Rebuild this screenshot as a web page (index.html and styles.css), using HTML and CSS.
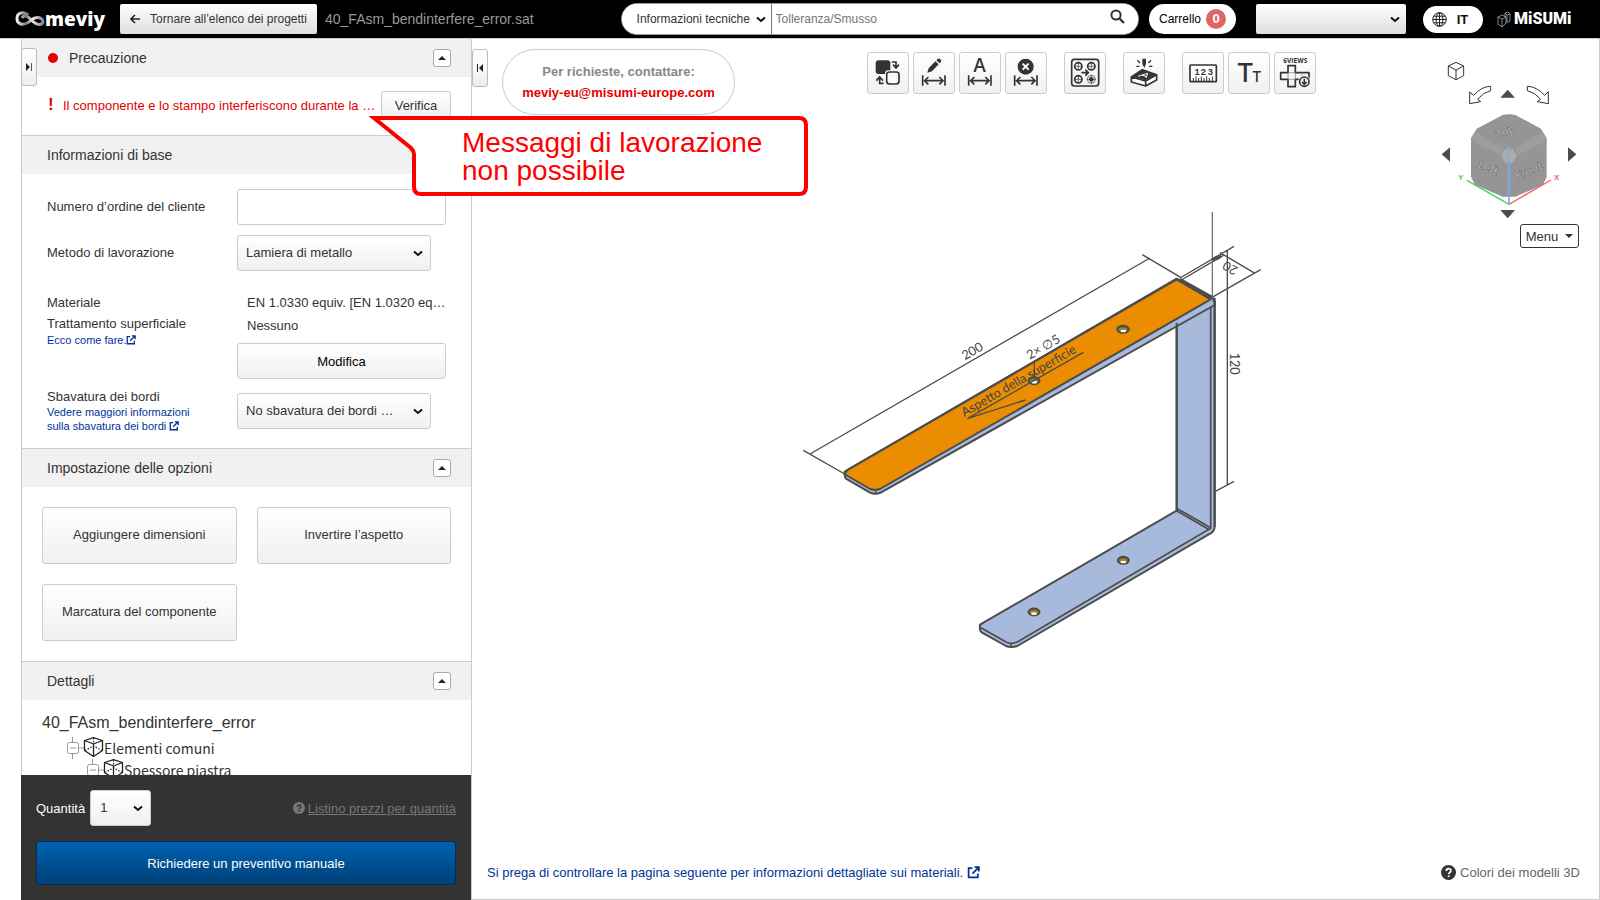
FILE: index.html
```html
<!DOCTYPE html>
<html lang="it">
<head>
<meta charset="utf-8">
<title>meviy</title>
<link rel="stylesheet" href="styles.css">
</head>
<body>
<svg class="defs" aria-hidden="true">
  <defs>
    <symbol id="external" viewBox="0 0 12 12"><path d="M5 2H1.500V10.500H10V7M7 1H11V5M11 1L5 7" fill="none" stroke="currentColor" stroke-width="1.600"/></symbol>
    <symbol id="span-arrow" viewBox="3 3 120 120"><g fill="none" stroke="#333" stroke-width="5"><path d="M29 70V101M96 70V101M36 86H90M46 75L35 86L46 97M79 75L90 86L79 97"/></g></symbol>
    <symbol id="question" viewBox="0 0 14 14"><circle cx="7" cy="7" r="7" fill="currentColor"/><path d="M5 5.500C5 2.700 9.200 2.900 9.200 5.300C9.200 6.800 7.200 6.900 7.200 8.600M7.200 9.700V11.300" fill="none" stroke="var(--mark)" stroke-width="1.700"/></symbol>
    <symbol id="tree-cube" viewBox="0 0 37 22"><g fill="none" stroke="#999"><rect x=".5" y="5.500" width="11" height="11" rx="2"/><path d="M3 11H9M12 11H17M5.500 0V5M5.500 17V22"/></g><g fill="none" stroke="#222" stroke-width="1.300" stroke-linejoin="round"><path d="M17.500 3.500L26.500 .7L35.500 3.500V13.500L26.500 19.500L17.500 13.500ZM17.500 3.500L26.500 7L35.500 3.500M26.500 7V19.500"/><path d="M26.500 1V7M18 13.500L26.500 9L35 13.500" stroke-dasharray="1.500 1.500"/></g></symbol>
  </defs>
</svg>

<header class="topbar">
  <a class="brand" href="#" aria-label="meviy">
    <svg class="brand-mark" viewBox="0 0 30 16"><defs><linearGradient id="loop"><stop offset="0" stop-color="#f4f0f4"/><stop offset=".35" stop-color="#777"/><stop offset=".6" stop-color="#eee"/><stop offset="1" stop-color="#8a8590"/></linearGradient></defs><path d="M13 4C9 0 2 1.500 2 7.500C2 13 7 14.500 12 12C16 10 18 6.500 22 6.500C29 6.500 30 13.500 24 13.500C19 13.500 17 8.500 13 6C10 4 8 5 7 7" fill="none" stroke="url(#loop)" stroke-width="3"/></svg>
    <span class="brand-name">meviy</span>
  </a>
  <button class="back" type="button"><svg width="10" height="10" viewBox="0 0 10 10"><path d="M10 5H1M5 1L1 5L5 9" fill="none" stroke="#222" stroke-width="1.600"/></svg>Tornare all’elenco dei progetti</button>
  <span class="filename">40_FAsm_bendinterfere_error.sat</span>
  <form class="search">
    <select aria-label="Categoria"><option>Informazioni tecniche</option></select>
    <input type="text" placeholder="Tolleranza/Smusso" aria-label="Cerca">
    <button type="button" aria-label="Cerca"><svg width="15" height="15" viewBox="0 0 15 15"><circle cx="6" cy="6" r="4.600" fill="none" stroke="#333" stroke-width="2"/><path d="M9.500 9.500L14 14" stroke="#333" stroke-width="2.400"/></svg></button>
  </form>
  <a class="cart" href="#">Carrello <span class="badge">0</span></a>
  <select class="account" aria-label="Account"><option></option></select>
  <button class="lang" type="button"><svg width="15" height="15" viewBox="0 0 15 15"><g fill="none" stroke="#222"><circle cx="7.500" cy="7.500" r="6.800"/><ellipse cx="7.500" cy="7.500" rx="3.400" ry="6.800"/><path d="M7.500 1V14M1 7.500H14M2 4.200H13M2 10.800H13"/></g></svg>IT</button>
  <a class="misumi" href="#"><svg width="14" height="17" viewBox="0 0 14 17"><path d="M1 6L5 4L9 6V12L5 16L1 13ZM1 6L5 8L9 6M5 8V16M8 6V2L11 1L13 3V10L9 12M8 2L10 4L13 3M10 4V11" fill="none" stroke="#aaa" stroke-width=".8"/></svg><span>MiSUMi</span></a>
</header>

<div class="workspace">
  <aside class="sidebar">
    <button class="tab tab-left" type="button" aria-label="Espandi pannello"><svg width="8" height="10" viewBox="0 0 8 10"><path d="M1 1L5 5L1 9Z" fill="#222"/><path d="M6.500 1V9" stroke="#555"/></svg></button>
    <div class="panels">
      <section>
        <h2 class="panel-head first"><span class="dot"></span>Precauzione<button class="toggle" type="button" aria-label="Comprimi"></button></h2>
        <div class="warning">
          <strong>!</strong><span class="warning-text">Il componente e lo stampo interferiscono durante la …</span>
          <button class="btn verify" type="button">Verifica</button>
        </div>
      </section>
      <section>
        <h2 class="panel-head">Informazioni di base<button class="toggle" type="button" aria-label="Comprimi"></button></h2>
        <div class="form">
          <label class="line" for="order">Numero d’ordine del cliente</label>
          <input id="order" class="field" type="text">
          <label class="line" for="method">Metodo di lavorazione</label>
          <select id="method" class="btn pick"><option>Lamiera di metallo</option></select>
          <div class="material-labels">
            <p>Materiale</p><p>Trattamento superficiale</p>
            <a href="#">Ecco come fare.<svg class="ext-small"><use href="#external"/></svg></a>
          </div>
          <div class="material">
            <p>EN 1.0330 equiv. [EN 1.0320 eq…</p><p>Nessuno</p>
            <button class="btn modify" type="button">Modifica</button>
          </div>
          <div class="edge-labels">
            <label for="edge">Sbavatura dei bordi</label>
            <a href="#">Vedere maggiori informazioni<br>sulla sbavatura dei bordi <svg class="ext-small"><use href="#external"/></svg></a>
          </div>
          <select id="edge" class="btn pick"><option>No sbavatura dei bordi …</option></select>
        </div>
      </section>
      <section>
        <h2 class="panel-head">Impostazione delle opzioni<button class="toggle" type="button" aria-label="Comprimi"></button></h2>
        <div class="options">
          <button class="btn" type="button">Aggiungere dimensioni</button>
          <button class="btn" type="button">Invertire l’aspetto</button>
          <button class="btn" type="button">Marcatura del componente</button>
        </div>
      </section>
      <section>
        <h2 class="panel-head">Dettagli<button class="toggle" type="button" aria-label="Comprimi"></button></h2>
        <div class="details">
          <h3>40_FAsm_bendinterfere_error</h3>
          <ul class="tree">
            <li><svg class="node"><use href="#tree-cube"/></svg>Elementi comuni
              <ul><li><svg class="node"><use href="#tree-cube"/></svg>Spessore piastra</li></ul>
            </li>
          </ul>
        </div>
      </section>
    </div>
    <div class="order">
      <div class="qty">
        <label for="qty">Quantità</label>
        <select id="qty" class="btn"><option>1</option></select>
        <a class="prices" href="#"><svg><use href="#question"/></svg><span>Listino prezzi per quantità</span></a>
      </div>
      <button class="quote" type="button">Richiedere un preventivo manuale</button>
    </div>
  </aside>

  <main class="viewer">
    <div class="stage">
      <svg class="model" viewBox="0 0 1530 1380">
        <g stroke="#4c4c4c" stroke-width="6" stroke-linejoin="round">
          <path d="M1190 360L1304 296V980Q1304 995 1285 1004L712 1338Q693 1344 678 1338L605 1297Q598 1292 600 1282V1274L1190 932Z" fill="#a8badb"/>
          <path d="M1292 310V985L712 1326Q693 1334 678 1326L603 1283M693 1330V1340M1192 926L1292 983M1190 932L1288 989" fill="none" stroke-width="5"/>
          <path d="M194 815L1190 236L1298 294L1304 304V315L302 878Q286 885 270 878L198 836Q193 832 194 815Z" fill="#a8badb"/>
          <path d="M206 808L1190 238L1292 298L300 867Q286 872 270 867L198 825Q190 818 206 808Z" fill="#eb8d00"/>
          <path d="M1190 238L1294 294M1200 237L1298 292" stroke-width="7" fill="none"/>
          <path d="M1298 302Q1304 302 1304 312V980M1190 368V932" fill="none"/>
          <path d="M287 870V880" stroke-width="4"/>
        </g>
        <g stroke="#4c4c4c" stroke-width="7">
          <g fill="#9c821c"><ellipse cx="1029" cy="388" rx="17" ry="10"/><ellipse cx="762" cy="542" rx="16" ry="10"/><ellipse cx="1030" cy="1081" rx="16" ry="10"/><ellipse cx="762" cy="1236" rx="16" ry="10"/></g>
        </g>
        <g fill="#fff"><ellipse cx="1030" cy="393" rx="9" ry="4"/><ellipse cx="763" cy="547" rx="9" ry="4"/><ellipse cx="1030" cy="1086" rx="9" ry="4"/><ellipse cx="762" cy="1241" rx="9" ry="4"/></g>
        <g fill="none" stroke="#4c4c4c" stroke-width="4">
          <path d="M90 762L1110 174M70 751L194 822M1087 164L1202 232M1200 234L1362 139M1204 240L1330 166M1320 158L1425 220M1296 292L1442 209M1342 150V856M1306 874L1362 844M763 482V532M562 656L910 457M562 656L736 600"/>
          <path d="M1297 36V292" stroke="#777"/>
          <path d="M1296 180L1312 170M1308 178L1324 168" stroke-width="8"/>
        </g>
        <g class="dims">
          <text transform="translate(555 481) rotate(-30)">200</text>
          <text transform="translate(749 479) rotate(-30)">2× ∅5</text>
          <text transform="translate(1350 458) rotate(90)">120</text>
          <text transform="translate(1376 204) rotate(210)">20</text>
          <text transform="translate(553 651) rotate(-30)">Aspetto della superficie</text>
        </g>
      </svg>
    </div>
    <div class="viewer-top">
      <button class="tab tab-right" type="button" aria-label="Comprimi pannello"><svg width="8" height="10" viewBox="0 0 8 10"><path d="M7 1L3 5L7 9Z" fill="#222"/><path d="M1.500 1V9" stroke="#222"/></svg></button>
      <div class="contact">Per richieste, contattare:<a href="#">meviy-eu@misumi-europe.com</a></div>
      <div class="toolbar">
        <div class="tools">
          <button type="button" aria-label="Inverti"><svg viewBox="3 3 120 120"><rect x="26" y="25" width="44" height="41" rx="9" fill="#333"/><rect x="54" y="55" width="45" height="44" rx="10" fill="#fafafa"/><rect x="59" y="60" width="37" height="36" rx="8" fill="#fafafa" stroke="#333" stroke-width="5"/><path d="M74 30H87V45M78 38L87 48L96 38M50 94H38V78M28 86L38 75L48 86" fill="none" stroke="#333" stroke-width="5"/></svg></button>
          <button type="button" aria-label="Modifica quota"><svg viewBox="3 3 120 120"><path d="M43 62L47 49L67 28L77 37L57 58ZM70 25L74 21Q78 18 82 22Q87 26 84 30L80 34Z" fill="#333"/><use href="#span-arrow" x="3" y="3" width="120" height="120"/></svg></button>
          <button type="button" aria-label="Testo quota"><svg viewBox="3 3 120 120"><text class="glyph" x="62" y="61" font-size="56">A</text><use href="#span-arrow" x="3" y="3" width="120" height="120"/></svg></button>
          <button type="button" aria-label="Elimina quota"><svg viewBox="3 3 120 120"><circle cx="62" cy="44" r="24" fill="#333"/><path d="M53 35L71 53M71 35L53 53" stroke="#fff" stroke-width="6"/><use href="#span-arrow" x="3" y="3" width="120" height="120"/></svg></button>
        </div>
        <div class="tools">
          <button type="button" aria-label="Fori"><svg viewBox="3 3 120 120"><g fill="none" stroke="#333" stroke-width="5"><rect x="23" y="22" width="81" height="80" rx="8"/><circle cx="43" cy="43" r="11"/><circle cx="82" cy="43" r="11"/><circle cx="43" cy="82" r="11"/><path d="M52 62H72M64 53L73 62L64 71"/></g><g fill="none" stroke="#333" stroke-width="2"><path d="M32 43H54M43 32V54M71 43H93M82 32V54M32 82H54M43 71V93M68 82H96M82 68V96"/><circle cx="82" cy="82" r="12"/></g><circle cx="82" cy="82" r="7" fill="#333"/></svg></button>
        </div>
        <div class="tools">
          <button type="button" aria-label="Marcatura"><svg viewBox="3 3 120 120"><path d="M25 75L58 53L101 68V84L68 102L25 90ZM25 75L68 87L101 68M68 87V102" fill="#fff" stroke="#333" stroke-width="5" stroke-linejoin="round"/><path d="M28 74L58 54L98 68L68 85Z" fill="#333"/><path d="M45 73L74 64L69 78M57 69L70 74" stroke="#fff" stroke-width="3" fill="none"/><path d="M58 20H69V36L64 48L58 36Z" fill="#333"/><path d="M43 25L51 33M40 43H49M84 25L76 33M88 43H78" stroke="#333" stroke-width="4"/></svg></button>
        </div>
        <div class="tools">
          <button type="button" aria-label="Misura"><svg viewBox="3 3 120 120"><rect x="24" y="39" width="79" height="50" rx="2" fill="#fff" stroke="#333" stroke-width="5"/><g class="digits"><text x="45" y="69">1</text><text x="64" y="69">2</text><text x="85" y="69">3</text></g><path d="M34 88V78M42 88V73M50 88V78M58 88V73M66 88V78M74 88V73M82 88V78M91 88V73" stroke="#333" stroke-width="3"/></svg></button>
          <button type="button" aria-label="Dimensione testo"><svg viewBox="3 3 120 120"><text class="glyph" x="52" y="90" font-size="78">T</text><text class="glyph" x="86" y="90" font-size="44">T</text></svg></button>
          <button type="button" aria-label="6 viste"><svg viewBox="3 3 120 120"><text class="views" x="64" y="32">6VIEWS</text><g fill="none" stroke="#333" stroke-width="5" stroke-linejoin="round"><path d="M42 41H64V62H105V82H64V104H42V82H20V62H42Z"/><circle cx="91" cy="89" r="19" fill="#f6f6f6" stroke="none"/><circle cx="91" cy="89" r="14"/><path d="M91 80V96M84 90L91 97L98 90"/></g><path d="M42 62H64V82H42ZM84 62V72" fill="none" stroke="#777" stroke-width="2"/></svg></button>
        </div>
      </div>
      <div class="nav">
        <svg class="nav-cube" viewBox="60 30 420 480">
          <g fill="none" stroke="#333" stroke-width="3" stroke-linejoin="round">
            <path d="M85 48L108 37L131 48V77L108 89L85 77ZM85 48L108 60L131 48M108 60V89"/>
            <path d="M212 109Q185 109 161 136L149 126V161L182 155L173 148Q190 127 212 122ZM322 109Q349 109 374 136L385 125V161L352 155L362 148Q345 127 322 122Z"/>
          </g>
          <path d="M241 143L263 119L285 143ZM241 480H285L263 505ZM90 292V335L65 313ZM444 292V335L469 313Z" fill="#4c4c4c"/>
          <path d="M248 195Q267 190 286 195L363 236L380 264V381L369 404L286 440H248L165 404L153 381V264L170 236Z" fill="#959595"/>
          <path d="M170 244L180 254L250 296L243 316L163 276L155 262ZM363 244L354 254L284 296L291 316L371 276L379 262Z" fill="#9e9e9e"/>
          <path d="M256 297H278L291 318L278 338H256L243 318Z" fill="#acacac"/>
          <g class="faces"><text transform="translate(234 266) rotate(-22)">Top</text><text transform="translate(172 352) rotate(24)">Left</text><text transform="translate(292 390) rotate(-24)">Front</text></g>
          <path d="M141 391L267 463" stroke="#3bd45c" stroke-width="4"/><path d="M393 390L267 463" stroke="#fb6060" stroke-width="4"/><path d="M267 318V460" stroke="#75aef0" stroke-width="5"/>
          <g class="axes"><text x="114" y="389" fill="#3bd45c">Y</text><text x="402" y="390" fill="#fb6060">X</text><text x="259" y="307" fill="#75aef0">Z</text></g>
        </svg>
        <button class="menu" type="button">Menu</button>
      </div>
    </div>
    <div class="viewer-foot">
      <a href="#">Si prega di controllare la pagina seguente per informazioni dettagliate sui materiali. <svg><use href="#external"/></svg></a>
      <span class="legend"><svg><use href="#question"/></svg>Colori dei modelli 3D</span>
    </div>
  </main>
</div>

<div class="callout">
  <svg viewBox="0 0 440 80"><path d="M6 2H431Q438 2 438 9V71Q438 78 431 78H53Q46 78 46 71V38Q46 35 43 32Z" fill="#fff" stroke="#f00" stroke-width="4"/></svg>
  <p>Messaggi di lavorazione<br>non possibile</p>
</div>
</body>
</html>
```

FILE: styles.css
```css
* { box-sizing: border-box; }
body {
  margin: 0;
  height: 100vh;
  display: flex;
  flex-direction: column;
  overflow: hidden;
  font: 13px "Liberation Sans", Arial, sans-serif;
  color: #333;
  background: #fff;
}
h2, h3, p, ul { margin: 0; padding: 0; font-weight: normal; }
button, input, select { font: inherit; color: inherit; margin: 0; }
button { padding: 0; cursor: pointer; }
a { text-decoration: none; color: #039; }
select {
  --chevron: url("data:image/svg+xml,%3Csvg xmlns='http://www.w3.org/2000/svg' width='10' height='7'%3E%3Cpath d='M1 1.500L5 5L9 1.500' fill='none' stroke='%23111' stroke-width='2'/%3E%3C/svg%3E");
  appearance: none;
}
.defs { position: absolute; width: 0; height: 0; }

.topbar {
  flex: none;
  display: flex;
  align-items: center;
  height: 39px;
  padding: 0 28px 0 15px;
  background: #000;
  border-bottom: 1px solid #ccc;
}
.brand { display: flex; align-items: center; width: 105px; color: #fff; }
.brand-mark { width: 30px; height: 16px; }
.brand-name { font: 800 19px/24px "Open Sans", sans-serif; padding-bottom: 1px; }
.back {
  display: flex;
  align-items: center;
  justify-content: center;
  gap: 10px;
  flex: none;
  width: 197px;
  height: 30px;
  border: 0;
  border-radius: 2px;
  background: linear-gradient(#fff, #ddd);
  font-size: 12px;
}
.filename { flex: none; margin-left: 8px; font-size: 14px; color: #999; }
.search {
  flex: 1;
  display: flex;
  height: 32px;
  margin: 0 10px 0 87px;
  border: 1px solid #999;
  border-radius: 16px;
  background: #fff;
  overflow: hidden;
}
.search select { width: 150px; padding: 0 4px 0 15px; border: 0; border-right: 1px solid #777; background: var(--chevron) no-repeat right 5px center #fff; font-size: 12px; }
.search input { flex: 1; min-width: 0; border: 0; padding: 0 4px; outline: 0; font-size: 12px; }
.search input::placeholder { color: #757575; }
.search button { width: 38px; border: 0; background: #fff; padding: 0 2px 2px 0; }
.cart {
  display: flex;
  align-items: center;
  gap: 5px;
  height: 30px;
  padding: 0 10px;
  border-radius: 15px;
  background: #fff;
  color: #000;
  font-size: 12px;
}
.badge { width: 20px; height: 20px; border-radius: 50%; background: #e06464; color: #fff; font: bold 13px/20px "Liberation Sans", sans-serif; text-align: center; }
.account { width: 150px; height: 30px; margin: 0 17px 0 20px; border: 0; border-radius: 2px; background: var(--chevron) no-repeat right 6px center, linear-gradient(#fff, #ddd); color: #000; }
.lang { display: flex; align-items: center; justify-content: center; gap: 10px; width: 60px; height: 27px; padding-right: 6px; border: 0; border-radius: 14px; background: #fff; font-weight: bold; color: #111; }
.misumi { display: flex; align-items: center; gap: 3px; width: 89px; padding-left: 14px; color: #fff; font: 900 16px/20px Roboto, sans-serif; }
.misumi svg { flex: none; }

.workspace { flex: 1; min-height: 0; display: flex; padding-left: 21px; }
.sidebar { position: relative; flex: none; width: 451px; display: flex; flex-direction: column; border: solid #ccc; border-width: 0 1px; }
.panels { flex: 1; min-height: 0; overflow: hidden; }
.panel-head {
  display: flex;
  align-items: center;
  height: 39px;
  padding: 0 20px 0 25px;
  border-top: 1px solid #ccc;
  background: #f1f1f1;
  font-size: 14px;
}
.panel-head.first { height: 38px; padding-left: 26px; border: 0; }
.dot { width: 10px; height: 10px; margin-right: 11px; border-radius: 50%; background: #e60000; }
.toggle { width: 18px; height: 18px; margin-left: auto; border: 1px solid #aaa; border-radius: 3px; background: #fff; display: grid; place-items: center; }
.toggle::before { content: ""; border: 4px solid transparent; border-bottom: 4px solid #222; border-top: 0; }
.btn { border: 1px solid #ccc; border-radius: 3px; background: linear-gradient(#fff, #f0f0f0); }
select.btn { background: var(--chevron) no-repeat right 7px center, linear-gradient(#fff, #f0f0f0); }
.tab { position: absolute; z-index: 1; width: 16px; height: 38px; border: 1px solid #bbb; border-radius: 3px; background: linear-gradient(#fff, #eee); display: grid; place-items: center; }
.tab-left { left: -1px; top: 9px; }
.tab-right { left: 0; top: 10px; }

.warning { display: flex; align-items: center; height: 58px; padding: 0 20px 2px 26px; color: #e60000; }
.warning strong { width: 15px; font-size: 17px; }
.warning-text { flex: 1; white-space: nowrap; }
.verify { width: 70px; height: 28px; color: #333; }

.form { display: grid; grid-template-columns: 190px 1fr; row-gap: 10px; align-items: center; padding: 15px 25px; }
.line { padding-bottom: 2px; }
.field { width: 100%; height: 36px; border: 1px solid #ccc; border-radius: 3px; background: #fff; }
.pick { width: 194px; height: 36px; padding: 0 20px 2px 8px; }
.material-labels, .material { margin-top: 10px; align-self: start; min-width: 0; }
.material-labels p:first-child { line-height: 23px; }
.material-labels p + p { line-height: 20px; }
.form a { display: block; font-size: 11px; line-height: 14px; }
.material-labels a { line-height: 12px; }
.ext-small { width: 10px; height: 10px; vertical-align: -1px; }
.material p { padding-left: 10px; line-height: 23px; white-space: nowrap; }
.modify { width: 100%; height: 36px; margin-top: 6px; color: #000; }
.edge-labels label { display: block; line-height: 16px; }

.options { display: grid; grid-template-columns: 1fr 1fr; gap: 20px; padding: 20px; }
.options .btn { height: 57px; padding-bottom: 2px; }

.details { padding: 12px 20px; }
.details h3 { font-size: 16px; line-height: 22px; }
.tree { list-style: none; padding: 3px 0 0 25px; font: 14px/22px "Noto Sans CJK JP", sans-serif; }
.tree ul { list-style: none; padding-left: 20px; }
.tree li { height: 22px; white-space: nowrap; }
.node { width: 37px; height: 22px; vertical-align: top; }

.order { margin-left: -1px; padding: 15px; background: #333; color: #fff; }
.qty { display: flex; align-items: center; margin-bottom: 15px; }
.qty select { width: 61px; height: 36px; margin-left: 5px; padding: 0 20px 2px 9px; color: #333; }
.prices { display: flex; align-items: center; gap: 3px; margin-left: auto; color: #777; --mark: #333; }
.prices span { text-decoration: underline; }
.prices svg { width: 12px; height: 12px; }
.quote { width: 100%; height: 44px; border: 1px solid #002d59; border-radius: 3px; background: linear-gradient(#0062b3, #004178); color: #fff; }

.viewer { position: relative; flex: 1; min-width: 0; display: flex; flex-direction: column; border: solid #ccc; border-width: 0 1px 1px 0; }
.stage { position: absolute; inset: 0; display: flex; align-items: center; justify-content: center; padding: 0 2px 78px 0; }
.model { width: 510px; height: 460px; }
.dims { font: 38px Lato, sans-serif; fill: #444; }
.viewer-top { position: relative; display: flex; align-items: flex-start; padding: 10px 19px 0 30px; }
.contact {
  width: 233px;
  height: 66px;
  padding: 11px 0;
  border: 1px solid #ccc;
  border-radius: 33px;
  text-align: center;
  line-height: 21px;
  font-weight: bold;
  color: #888;
}
.contact a { display: block; color: #e60000; }
.toolbar { display: flex; gap: 17px; margin: 3px 124px 0 auto; }
.tools { display: flex; gap: 4px; }
.tools button { width: 42px; height: 42px; border: 1px solid #ccc; border-radius: 3px; background: linear-gradient(#fff, #f0f0f0); }
.tools svg { display: block; width: 40px; height: 40px; }
.glyph { font-family: Inter, sans-serif; font-weight: 500; fill: #333; text-anchor: middle; }
.digits { font: bold 28px "Liberation Sans", sans-serif; fill: #333; text-anchor: middle; }
.views { font: bold 20px "Open Sans", sans-serif; fill: #333; text-anchor: middle; }
.nav { width: 140px; margin-top: 11px; display: flex; flex-direction: column; align-items: flex-end; gap: 4px; }
.nav-cube { width: 140px; height: 160px; }
.faces { font: 34px "Noto Sans", sans-serif; fill: #bbb; stroke: #6c6c6c; stroke-width: 3px; paint-order: stroke; }
.axes { font: bold 24px "Liberation Sans", sans-serif; }
.menu { width: 59px; height: 24px; margin-right: 1px; border: 1px solid #333; border-radius: 3px; background: #fff; display: flex; align-items: center; justify-content: center; gap: 7px; }
.menu::after { content: ""; border: 4px solid transparent; border-top-color: #333; border-bottom: 0; }
.viewer-foot { position: relative; display: flex; justify-content: space-between; align-items: center; margin-top: auto; padding: 0 19px 19px 15px; }
.viewer-foot svg { width: 13px; height: 13px; vertical-align: -2px; }
.legend { display: flex; align-items: center; gap: 4px; color: #666; --mark: #fff; }
.viewer-foot .legend svg { width: 15px; height: 15px; color: #333; }

.callout { position: absolute; left: 368px; top: 116px; width: 440px; height: 80px; z-index: 2; }
.callout svg { position: absolute; inset: 0; }
.callout p { position: relative; padding: 13px 0 0 94px; font-size: 28px; line-height: 28px; color: #f00; }
```
